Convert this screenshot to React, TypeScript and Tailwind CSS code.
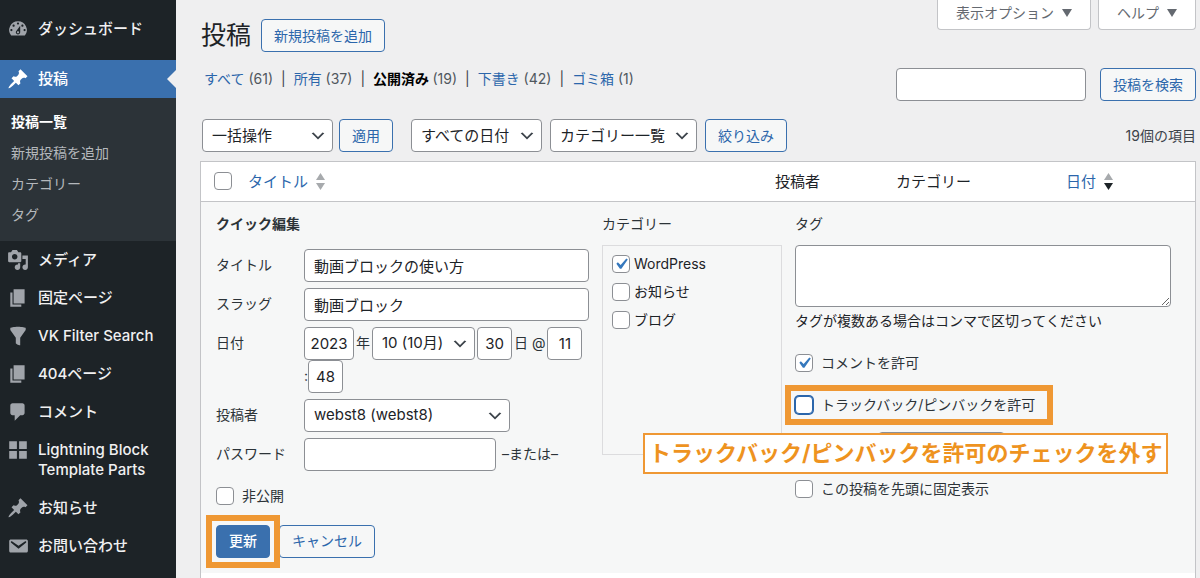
import type { ReactNode } from "react";
import clsx from "clsx";

interface MenuItem {
  label: string;
  icon: string;
  current?: boolean;
  children?: string[];
}

const ICONS = {
  dashboard:
    "M3.76 16h12.48A7.998 7.998 0 0 0 10 3a7.998 7.998 0 0 0-6.24 13zM10 4c.55 0 1 .45 1 1s-.45 1-1 1-1-.45-1-1 .45-1 1-1zM6 6c.55 0 1 .45 1 1s-.45 1-1 1-1-.45-1-1 .45-1 1-1zm8 0c.55 0 1 .45 1 1s-.45 1-1 1-1-.45-1-1 .45-1 1-1zm-5.37 5.55L12 7v6c0 1.1-.9 2-2 2s-2-.9-2-2c0-.57.24-1.08.63-1.45zM4 10c.55 0 1 .45 1 1s-.45 1-1 1-1-.45-1-1 .45-1 1-1zm12 0c.55 0 1 .45 1 1s-.45 1-1 1-1-.45-1-1 .45-1 1-1zm-5 3c0-.55-.45-1-1-1s-1 .45-1 1 .45 1 1 1 1-.45 1-1z",
  post: "M10.44 3.02l1.82-1.82 6.36 6.35-1.83 1.82c-1.05-.68-2.48-.57-3.41.36l-.75.75c-.92.93-1.04 2.35-.35 3.41l-1.83 1.82-2.41-2.41-2.8 2.79c-.42.42-3.38 2.71-3.8 2.29s1.86-3.39 2.28-3.81l2.79-2.79L4.1 9.36l1.83-1.82c1.05.69 2.48.57 3.4-.36l.75-.75c.93-.92 1.05-2.35.36-3.41z",
  media:
    "M13 11V4c0-.55-.45-1-1-1h-1.67L9 1H5L3.67 3H2c-.55 0-1 .45-1 1v7c0 .55.45 1 1 1h10c.55 0 1-.45 1-1zM7 4.5c1.38 0 2.5 1.12 2.5 2.5S8.38 9.5 7 9.5 4.5 8.38 4.5 7 5.62 4.5 7 4.5zM14 6h5v10.5c0 1.38-1.12 2.5-2.5 2.5S14 17.88 14 16.5s1.12-2.5 2.5-2.5c.17 0 .34.02.5.05V9h-3V6zm-4 8.05V13h2v3.5c0 1.38-1.12 2.5-2.5 2.5S7 17.88 7 16.5 8.12 14 9.5 14c.17 0 .34.02.5.05z",
  page: "M6 15V2h10v13H6zm-1 1h8v2H3V5h2v11z",
  filter:
    "M3 4.5v-2s3.34-1 7-1 7 1 7 1v2l-5 7.03v6.97s-1.22-.09-2.25-.59S8 16.5 8 16.5v-4.97z",
  comment:
    "M5 2h9c1.1 0 2 .9 2 2v7c0 1.1-.9 2-2 2h-2l-5 5v-5H5c-1.1 0-2-.9-2-2V4c0-1.1.9-2 2-2z",
  grid: "M2 2h7v7H2V2zm9 0h7v7h-7V2zM2 11h7v7H2v-7zm9 0h7v7h-7v-7z",
  email:
    "M3.87 4h13.25C18.37 4 19 4.59 19 5.79v8.42c0 1.19-.63 1.79-1.88 1.79H3.87c-1.25 0-1.88-.6-1.88-1.79V5.79c0-1.2.63-1.79 1.88-1.79zm6.62 8.6l6.74-5.53c.24-.2.43-.66.13-1.07-.29-.41-.82-.42-1.17-.17l-5.7 3.86L4.8 5.83c-.35-.25-.88-.24-1.17.17-.3.41-.11.87.13 1.07z",
};

const MENU: MenuItem[] = [
  {
    label: "投稿",
    icon: ICONS.post,
    current: true,
    children: ["投稿一覧", "新規投稿を追加", "カテゴリー", "タグ"],
  },
  { label: "メディア", icon: ICONS.media },
  { label: "固定ページ", icon: ICONS.page },
  { label: "VK Filter Search", icon: ICONS.filter },
  { label: "404ページ", icon: ICONS.page },
  { label: "コメント", icon: ICONS.comment },
  { label: "Lightning Block Template Parts", icon: ICONS.grid },
  { label: "お知らせ", icon: ICONS.post },
  { label: "お問い合わせ", icon: ICONS.email },
];

const VIEWS = [
  { label: "すべて", count: 61 },
  { label: "所有", count: 37 },
  { label: "公開済み", count: 19, current: true },
  { label: "下書き", count: 42 },
  { label: "ゴミ箱", count: 1 },
];

const fieldClass =
  "h-[33px] rounded border border-[#8c8f94] bg-white text-[15px] text-[#1d2327]";

function MenuLink({ label, icon, current }: MenuItem) {
  return (
    <a
      href="#"
      className={clsx(
        "relative flex py-[9px] pl-[7px] pr-3 text-[15px] font-medium leading-5",
        current ? "bg-[#3a70ae] text-white" : "text-[#f0f0f1]",
      )}
    >
      <svg
        viewBox="0 0 20 20"
        className={clsx(
          "-my-px mr-[9px] h-[22px] w-[22px] shrink-0",
          current ? "fill-white" : "fill-[#a0a4aa]",
        )}
      >
        <path fillRule="evenodd" d={icon} />
      </svg>
      <span>{label}</span>
      {current && (
        <span className="absolute right-0 top-1/2 -mt-[9px] border-y-[9px] border-r-[9px] border-y-transparent border-r-[#efeff0]" />
      )}
    </a>
  );
}

function Button({ children, primary }: { children: ReactNode; primary?: boolean }) {
  return (
    <button
      type="button"
      className={clsx(
        "h-[33px] shrink-0 whitespace-nowrap rounded border border-[#3a70ae] px-3 text-sm",
        primary ? "bg-[#3a70ae] font-medium text-white" : "bg-[#f6f7f7] text-[#2b66ab]",
      )}
    >
      {children}
    </button>
  );
}

function Select({
  id,
  label,
  value,
  className,
}: {
  id?: string;
  label?: string;
  value?: string;
  className?: string;
}) {
  return (
    <span className={clsx("relative block shrink-0", className)}>
      <select id={id} aria-label={label} className={clsx(fieldClass, "w-full appearance-none pl-[9px] pr-6")}>
        {value && <option>{value}</option>}
      </select>
      <svg
        viewBox="0 0 20 20"
        className="pointer-events-none absolute right-[6px] top-2 h-[18px] w-[18px] fill-[#3c434a]"
      >
        <path d="M5 6l5 5 5-5 2 1-7 7-7-7 2-1z" />
      </svg>
    </span>
  );
}

function Checkbox({
  label,
  checked,
  focused,
}: {
  label?: string;
  checked?: boolean;
  focused?: boolean;
}) {
  return (
    <span className="relative block h-[18px] w-[18px] shrink-0">
      <input
        type="checkbox"
        aria-label={label}
        defaultChecked={checked}
        className={clsx(
          "peer block h-[18px] w-[18px] appearance-none rounded border bg-white",
          focused ? "border-[#2b66ab] ring-1 ring-[#2b66ab]" : "border-[#8c8f94]",
        )}
      />
      <svg
        viewBox="0 0 20 20"
        className="pointer-events-none absolute -left-[2px] -top-[2px] hidden h-[22px] w-[22px] fill-[#3578bd] peer-checked:block"
      >
        <path d="M14.83 4.89l1.34.94-5.81 8.38H9.02L5.78 9.67l1.34-1.25 2.57 2.4z" />
      </svg>
    </span>
  );
}

function SortArrows({ desc }: { desc?: boolean }) {
  return (
    <svg viewBox="0 0 9 17" className="h-[17px] w-[9px]">
      <path d="M4.5 0L9 7H0z" fill="#a7aaad" />
      <path d="M4.5 17L0 10h9z" fill={desc ? "#1d2327" : "#a7aaad"} />
    </svg>
  );
}

function Field({ id, label, children }: { id: string; label: string; children: ReactNode }) {
  return (
    <div className="flex">
      <label htmlFor={id} className="w-[88px] shrink-0 leading-8">
        {label}
      </label>
      {children}
    </div>
  );
}

function QuickEdit() {
  return (
    <form className="pb-[15px] pl-[15px] pr-6 pt-3 text-sm leading-5 text-[#2c3338]">
      <div className="grid grid-cols-[373fr_180fr_376fr] gap-x-[13px]">
        <div>
          <p className="mb-[15px] font-semibold">クイック編集</p>
          <div className="flex flex-col gap-[6px]">
            <Field id="title" label="タイトル">
              <input id="title" defaultValue="動画ブロックの使い方" className={clsx(fieldClass, "w-full min-w-0 px-[9px]")} />
            </Field>
            <Field id="slug" label="スラッグ">
              <input id="slug" defaultValue="動画ブロック" className={clsx(fieldClass, "w-full min-w-0 px-[9px]")} />
            </Field>
            <Field id="year" label="日付">
              <div className="flex flex-wrap items-center gap-x-[2px]">
                <input id="year" defaultValue="2023" className={clsx(fieldClass, "w-[50px] text-center")} />
                <span>年</span>
                <Select label="月" value="10 (10月)" className="w-[103px]" />
                <input aria-label="日" defaultValue="30" className={clsx(fieldClass, "w-[35px] text-center")} />
                <span>日 @</span>
                <input aria-label="時" defaultValue="11" className={clsx(fieldClass, "w-[35px] text-center")} />
                <span className="flex items-center">
                  :
                  <input aria-label="分" defaultValue="48" className={clsx(fieldClass, "w-[35px] text-center")} />
                </span>
              </div>
            </Field>
            <Field id="author" label="投稿者">
              <Select id="author" value="webst8 (webst8)" className="w-[206px]" />
            </Field>
            <Field id="password" label="パスワード">
              <input id="password" className={clsx(fieldClass, "w-[192px] px-[9px]")} />
              <span className="ml-[6px] whitespace-nowrap leading-8">–または–</span>
            </Field>
          </div>
          <label className="mt-[15px] flex items-center gap-2">
            <Checkbox />
            非公開
          </label>
        </div>

        <div>
          <p className="mb-[11px]">カテゴリー</p>
          <div className="h-[210px] border border-[#dcdcde] px-[9px] pt-1 leading-7 text-[#1d2327]">
            <label className="flex items-center gap-1">
              <Checkbox checked />
              WordPress
            </label>
            <label className="flex items-center gap-1">
              <Checkbox />
              お知らせ
            </label>
            <label className="flex items-center gap-1">
              <Checkbox />
              ブログ
            </label>
          </div>
        </div>

        <div>
          <label htmlFor="tags" className="mb-[11px] block">
            タグ
          </label>
          <textarea id="tags" className="block h-[62px] w-full rounded border border-[#8c8f94] bg-white" />
          <p className="mt-1 text-[#1d2327]">タグが複数ある場合はコンマで区切ってください</p>
          <label className="mt-[22px] flex items-center gap-2">
            <Checkbox checked />
            コメントを許可
          </label>
          <label className="relative mt-[22px] flex items-center gap-2">
            <span className="absolute -left-[10px] -top-[10px] h-10 w-[268px] border-[6px] border-[#ef9834]" />
            <Checkbox focused />
            トラックバック/ピンバックを許可
          </label>
          <div className="relative mt-[17px]">
            <Select label="ステータス" className="ml-[83px] w-[127px]" />
            {/* Step note laid over the form */}
            <p className="absolute -left-[152px] top-px whitespace-nowrap border-2 border-[#ef9834] bg-white px-1 text-[22px] font-bold leading-[37px] text-[#ee931f]">
              トラックバック/ピンバックを許可のチェックを外す
            </p>
          </div>
          <label className="mt-[14px] flex items-center gap-2">
            <Checkbox />
            この投稿を先頭に固定表示
          </label>
        </div>
      </div>

      <div className="mt-[19px] flex gap-[9px]">
        <span className="relative z-10">
          <Button primary>更新</Button>
          <span className="pointer-events-none absolute -inset-[10px] border-[6px] border-[#ef9834]" />
        </span>
        <Button>キャンセル</Button>
      </div>
    </form>
  );
}

export default function App() {
  return (
    <div
      lang="ja"
      className="flex min-h-screen bg-[#efeff0] font-['Inter','Noto_Sans_CJK_JP',sans-serif] text-sm text-[#3c434a]"
    >
      <nav className="w-44 shrink-0 bg-[#1d2327] pt-[10px]">
        <div className="mb-3">
          <MenuLink label="ダッシュボード" icon={ICONS.dashboard} />
        </div>
        {MENU.map((item) => (
          <div key={item.label}>
            <MenuLink {...item} />
            {item.children && (
              <ul className="bg-[#2c3338] pb-[11px] pl-[11px] pt-2 leading-[31px]">
                {item.children.map((child, i) => (
                  <li key={child}>
                    <a href="#" className={i === 0 ? "font-bold text-white" : "text-[#b4b8bc]"}>
                      {child}
                    </a>
                  </li>
                ))}
              </ul>
            )}
          </div>
        ))}
      </nav>

      <main className="flex min-w-0 grow flex-col pl-6 pr-1">
        <div className="flex items-start justify-between">
          <div className="flex items-center gap-[10px] pl-px pt-[19px]">
            <h1 className="text-[25px] leading-[33px] text-[#1d2327]">投稿</h1>
            <Button>新規投稿を追加</Button>
          </div>
          <div className="flex gap-[7px] text-[#646970]">
            {["表示オプション", "ヘルプ"].map((tab) => (
              <button
                key={tab}
                type="button"
                className="flex h-[30px] items-center gap-2 rounded-b border border-t-0 border-[#c3c4c7] bg-white px-[18px] pb-[3px]"
              >
                {tab}
                <svg viewBox="0 0 10 8" className="h-2 w-[10px] fill-[#646970]">
                  <path d="M0 0h10L5 8z" />
                </svg>
              </button>
            ))}
          </div>
        </div>

        <div className="mt-4 flex items-start justify-between pl-1">
          <ul className="flex gap-2 leading-[22px]">
            {VIEWS.map((view, i) => (
              <li key={view.label} className="flex gap-2">
                <a href="#" className={view.current ? "font-bold text-black" : "text-[#2b66ab]"}>
                  {view.label} <span className="font-normal text-[#50575e]">({view.count})</span>
                </a>
                {i < VIEWS.length - 1 && <span>|</span>}
              </li>
            ))}
          </ul>
          <div className="flex gap-[14px]">
            <input type="search" aria-label="投稿を検索" className={clsx(fieldClass, "w-[190px] px-2")} />
            <Button>投稿を検索</Button>
          </div>
        </div>

        <div className="mt-[18px] flex items-center justify-between pl-[2px]">
          <div className="flex gap-[18px]">
            <div className="flex gap-[6px]">
              <Select label="一括操作" value="一括操作" className="w-[131px]" />
              <Button>適用</Button>
            </div>
            <div className="flex gap-2">
              <Select label="日付" value="すべての日付" className="w-[131px]" />
              <Select label="カテゴリー" value="カテゴリー一覧" className="w-[147px]" />
              <Button>絞り込み</Button>
            </div>
          </div>
          <span>19個の項目</span>
        </div>

        <div className="mt-[9px] grow border border-b-0 border-[#c3c4c7] bg-white">
          <table className="w-full table-fixed text-left">
            <thead className="text-[15px] text-[#1d2327]">
              <tr className="h-[39px] border-b border-[#c3c4c7]">
                <td className="w-[37px] pl-[13px]">
                  <Checkbox label="すべて選択" />
                </td>
                <th className="pl-[10px] font-normal">
                  <a href="#" className="flex items-center gap-2 text-[#2b66ab]">
                    タイトル <SortArrows />
                  </a>
                </th>
                <th className="w-[121px] pl-[10px] font-normal">投稿者</th>
                <th className="w-[170px] pl-[10px] font-normal">カテゴリー</th>
                <th className="w-[139px] pl-[10px] font-normal">
                  <a href="#" className="flex items-center gap-2 text-[#2b66ab]">
                    日付 <SortArrows desc />
                  </a>
                </th>
              </tr>
            </thead>
            <tbody>
              <tr className="bg-[#f6f7f7]">
                <td colSpan={5}>
                  <QuickEdit />
                </td>
              </tr>
            </tbody>
          </table>
        </div>
      </main>
    </div>
  );
}
